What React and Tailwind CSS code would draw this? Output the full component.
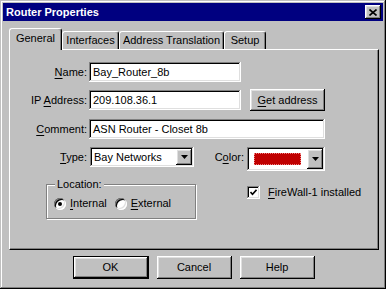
import React from 'react';

const raised = 'shadow-[inset_-1px_-1px_#000,inset_1px_1px_#fff,inset_-2px_-2px_#808080,inset_2px_2px_#dfdfdf]';
const sunken = 'shadow-[inset_-1px_-1px_#fff,inset_1px_1px_#808080,inset_-2px_-2px_#dfdfdf,inset_2px_2px_#000]';

function U({ children }) {
  return <span className="underline underline-offset-[2px]">{children}</span>;
}

function Arrow() {
  return (
    <svg width="7" height="4" viewBox="0 0 7 4"><path d="M0 0h7L3.5 4z" fill="#000" /></svg>
  );
}

function DropButton({ className = '' }) {
  return <div className={`flex items-center justify-center bg-[#c0c0c0] ${raised} ${className}`}><Arrow /></div>;
}

function Tab({ label, width, active }) {
  return active ? (
    <div className={`relative z-10 -mb-[1px] h-[22px] ${width} flex items-center justify-center pb-[2px] bg-[#c0c0c0] border-t border-l border-white border-r border-r-black rounded-t-[3px] shadow-[inset_-1px_0_#808080]`}>{label}</div>
  ) : (
    <div className={`h-[18px] ${width} flex items-center justify-center bg-[#c0c0c0] border-t border-l border-white border-r border-r-black rounded-t-[3px] shadow-[inset_-1px_0_#808080]`}>{label}</div>
  );
}

export default function App() {
  return (
    <div className="w-[386px] h-[289px] bg-[#c0c0c0] text-black text-[11px] leading-[13px] font-['Liberation_Sans',Arial,sans-serif] shadow-[inset_-1px_-1px_#000,inset_1px_1px_#c0c0c0,inset_-2px_-2px_#808080,inset_2px_2px_#fff] overflow-hidden">
      <div className="mx-[3px] pt-[3px]">
        <div className="h-[18px] bg-[#000080] flex items-center justify-between pl-[3px] pr-[2px]">
          <span className="text-white font-bold text-[11px]">Router Properties</span>
          <div className={`w-[16px] h-[14px] bg-[#c0c0c0] flex items-center justify-center ${raised}`}>
            <svg width="8" height="7" viewBox="0 0 8 7"><path d="M0.5 0.5l7 6M7.5 0.5l-7 6" stroke="#000" strokeWidth="1.6" /></svg>
          </div>
        </div>
      </div>

      <div className="ml-[9px] mt-[7px] h-[21px] flex items-end">
        <Tab label="General" width="w-[53px]" active />
        <Tab label="Interfaces" width="w-[57px]" />
        <Tab label="Address Translation" width="w-[105px]" />
        <Tab label="Setup" width="w-[42px]" />
      </div>

      <div className="ml-[9px] w-[370px] h-[201px] border-t border-l border-white border-r border-b border-r-black border-b-black shadow-[inset_-1px_-1px_#808080] pt-[12px]">
        <div className="flex items-center h-[20px]">
          <div className="w-[77px] text-right"><U>N</U>ame:</div>
          <div className={`ml-[2px] w-[152px] h-[20px] bg-white pl-[4px] flex items-center ${sunken}`}>Bay_Router_8b</div>
        </div>

        <div className="flex items-center h-[20px] mt-[8px]">
          <div className="w-[77px] text-right">IP <U>A</U>ddress:</div>
          <div className={`ml-[2px] w-[152px] h-[20px] bg-white pl-[4px] flex items-center ${sunken}`}>209.108.36.1</div>
          <div className={`ml-[9px] w-[75px] h-[22px] flex items-center justify-center ${raised}`}><span><U>G</U>et address</span></div>
        </div>

        <div className="flex items-center h-[20px] mt-[9px]">
          <div className="w-[77px] text-right"><U>C</U>omment:</div>
          <div className={`ml-[2px] w-[236px] h-[20px] bg-white pl-[4px] flex items-center ${sunken}`}>ASN Router - Closet 8b</div>
        </div>

        <div className="flex items-start h-[24px] mt-[8px]">
          <div className="w-[77px] h-[20px] flex items-center justify-end"><span><U>T</U>ype:</span></div>
          <div className={`ml-[3px] w-[104px] h-[20px] bg-white flex items-center justify-between pl-[4px] pr-[2px] ${sunken}`}>
            <span>Bay Networks</span>
            <DropButton className="w-[16px] h-[16px]" />
          </div>
          <div className="w-[53px] h-[20px] flex items-center justify-end pr-[3px]"><span>C<U>o</U>lor:</span></div>
          <div className={`w-[78px] h-[24px] bg-white flex items-center justify-between pl-[7px] pr-[2px] ${sunken}`}>
            <div className="w-[47px] h-[12px] bg-[#c00000] border border-dotted border-[#f08080]" />
            <DropButton className="w-[16px] h-[20px]" />
          </div>
        </div>

        <div className="flex items-start mt-[13px]">
          <div className="relative ml-[36px] w-[150px] h-[35px] border border-[#808080] shadow-[1px_1px_#fff,inset_1px_1px_#fff]">
            <span className="absolute left-[8px] -top-[7px] px-[2px] bg-[#c0c0c0]">Location:</span>
            <div className="flex items-center pl-[7px] pt-[12px]">
              <div className={`w-[12px] h-[12px] rounded-full bg-white flex items-center justify-center ${sunken}`}>
                <div className="w-[4px] h-[4px] rounded-full bg-black" />
              </div>
              <span className="ml-[4px]"><U>I</U>nternal</span>
              <div className={`ml-[8px] w-[12px] h-[12px] rounded-full bg-white ${sunken}`} />
              <span className="ml-[4px]"><U>E</U>xternal</span>
            </div>
          </div>
          <div className="ml-[51px] mt-[2px] flex items-center">
            <div className={`w-[13px] h-[13px] bg-white flex items-center justify-center ${sunken}`}>
              <svg width="7" height="7" viewBox="0 0 7 7"><path d="M0.5 3l2 2.2L6.5 0.8" stroke="#000" strokeWidth="1.6" fill="none" /></svg>
            </div>
            <span className="ml-[8px]"><U>F</U>ireWall-1 installed</span>
          </div>
        </div>
      </div>

      <div className="flex justify-center gap-[8px] mt-[6px] pl-[1px]">
        <div className={`w-[76px] h-[23px] border border-black flex items-center justify-center ${raised}`}>OK</div>
        <div className={`w-[75px] h-[23px] flex items-center justify-center ${raised}`}>Cancel</div>
        <div className={`w-[75px] h-[23px] flex items-center justify-center ${raised}`}>Help</div>
      </div>
    </div>
  );
}
